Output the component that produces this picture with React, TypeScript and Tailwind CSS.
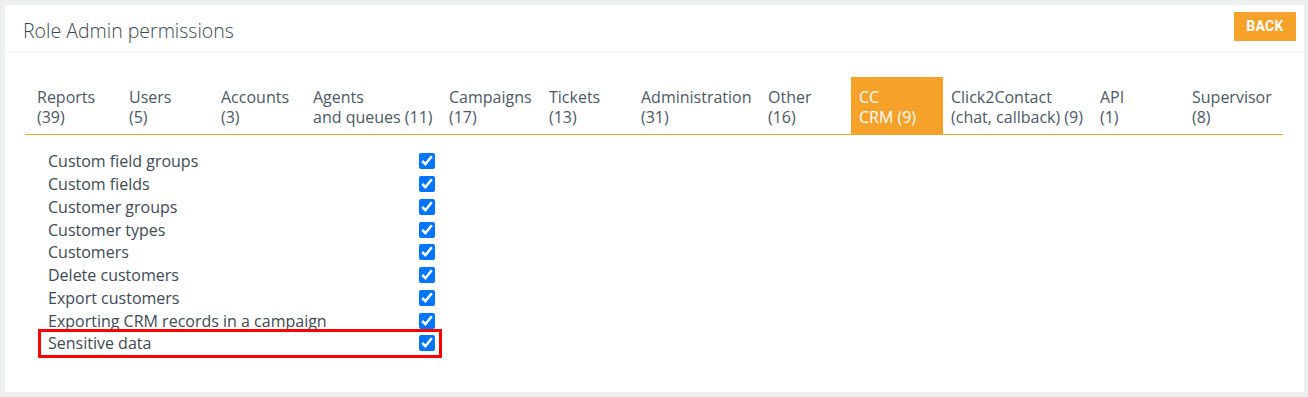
import React from 'react';

const tabs = [
  { top: 'Reports', bottom: '(39)', w: 'w-[92px]' },
  { top: 'Users', bottom: '(5)', w: 'w-[92px]' },
  { top: 'Accounts', bottom: '(3)', w: 'w-[92px]' },
  { top: 'Agents', bottom: 'and queues (11)', w: 'w-[136px]' },
  { top: 'Campaigns', bottom: '(17)', w: 'w-[100px]' },
  { top: 'Tickets', bottom: '(13)', w: 'w-[92px]' },
  { top: 'Administration', bottom: '(31)', w: 'w-[127px]' },
  { top: 'Other', bottom: '(16)', w: 'w-[91px]' },
  { top: 'CC', bottom: 'CRM (9)', w: 'w-[92px]', active: true },
  { top: 'Click2Contact', bottom: '(chat, callback) (9)', w: 'w-[149px]' },
  { top: 'API', bottom: '(1)', w: 'w-[92px]' },
  { top: 'Supervisor', bottom: '(8)', w: 'w-[92px]' },
];

const permissions = [
  'Custom field groups',
  'Custom fields',
  'Customer groups',
  'Customer types',
  'Customers',
  'Delete customers',
  'Export customers',
  'Exporting CRM records in a campaign',
  'Sensitive data',
];

const App = () => {
  return (
    <div className="min-h-[397px] bg-[#eef0ef] pt-[5px] pb-[5px] pl-[5px] pr-[4px] font-['Open_Sans',sans-serif]">
      <div className="bg-white h-[387px]">
        {/* Header */}
        <div className="h-[48px] flex items-center justify-between pl-[18px] pr-[8px] border-b border-[#f3f4f4]">
          <h1 className="text-[19.5px] font-light text-[#3b4753] mt-[4px]">Role Admin permissions</h1>
          <button className="h-[29px] w-[62px] bg-[#f6a12a] text-white text-[14px] font-bold font-['Roboto',sans-serif] tracking-[0.3px] self-start mt-[7px]">
            BACK
          </button>
        </div>

        {/* Tabs */}
        <div className="pt-[24px] pl-[20px]">
          <div className="w-[1258px] flex border-b border-[#f6a12a] pl-[4px]">
            {tabs.map((t) => (
              <div
                key={t.top}
                className={
                  (t.active
                    ? 'bg-[#f6a12a] text-white '
                    : 'text-[#4b5966] ') +
                  t.w +
                  ' shrink-0 px-[8px] pt-[10px] pb-[7px] text-[16px] leading-[20px] whitespace-nowrap'
                }
              >
                <div>{t.top}</div>
                <div>{t.bottom}</div>
              </div>
            ))}
          </div>
        </div>

        {/* Permissions */}
        <div className="pt-[15px] pl-[36px] flex flex-col w-[434px]">
          {permissions.map((p) => (
            <label
              key={p}
              className={
                p === 'Sensitive data'
                  ? 'h-[22.75px] flex items-center justify-between pl-[7px] pr-[4px] outline-[3px] outline-solid outline-[#ff0000]'
                  : 'h-[22.75px] flex items-center justify-between pl-[7px] pr-[4px]'
              }
            >
              <span className="text-[16px] text-[#3d4956]">{p}</span>
              <input type="checkbox" defaultChecked className="w-4 h-4" />
            </label>
          ))}
        </div>
      </div>
    </div>
  );
};

export default App;
